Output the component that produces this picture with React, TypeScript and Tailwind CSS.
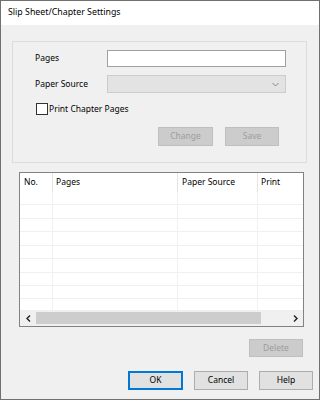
const font = { fontFamily: '"Noto Sans", "DejaVu Sans", sans-serif' };

function Btn({ label, disabled, primary, className }: { label: string; disabled?: boolean; primary?: boolean; className?: string }) {
  let look = 'border border-[#adadad] bg-[#e1e1e1] text-black';
  if (disabled) look = 'border border-[#bfbfbf] bg-[#cccccc] text-[#9d9d9d]';
  if (primary) look = 'border-2 border-[#0078d7] bg-[#e1e1e1] text-black';
  return (
    <div className={`flex items-center justify-center text-[8.5px] leading-none ${look} ${className ?? ''}`}>
      {label}
    </div>
  );
}

const rowHeights = [13, 14, 13, 14, 13, 14, 13, 13];

function Cols({ h, last }: { h: number; last?: boolean }) {
  return (
    <div className={`flex ${last ? '' : 'border-b border-[#f0f0f0]'}`} style={{ height: h }}>
      <div className="w-[33px] border-r border-[#f0f0f0]" />
      <div className="w-[125px] border-r border-[#f0f0f0]" />
      <div className="w-[80px] border-r border-[#f0f0f0]" />
      <div className="flex-1" />
    </div>
  );
}

export default function App() {
  return (
    <div className="w-[320px] h-[400px] border border-[#707070] bg-[#f0f0f0] flex flex-col text-[8.5px]" style={font}>
      <div className="h-[24px] bg-white flex items-center pl-[7px] text-[8.8px] text-black">
        Slip Sheet/Chapter Settings
      </div>

      {/* group box */}
      <div className="ml-[11px] mt-[16px] w-[295px] h-[122px] border border-[#dcdcdc] flex flex-col">
        <div className="mt-[8px] flex items-center h-[17px]">
          <div className="w-[94px] pl-[22px] text-black">Pages</div>
          <div className="w-[179px] h-[17px] border border-[#a0a0a0] bg-white" />
        </div>
        <div className="mt-[8px] flex items-center h-[18px]">
          <div className="w-[94px] pl-[22px] text-black">Paper Source</div>
          <div className="w-[179px] h-[18px] border border-[#cccccc] bg-[#e3e3e3] flex items-center justify-end pr-[6px]">
            <svg width="7" height="5" viewBox="0 0 7 5">
              <path d="M0.5 1 L3.5 4 L6.5 1" fill="none" stroke="#888" strokeWidth="1" />
            </svg>
          </div>
        </div>
        <div className="mt-[10px] flex items-center pl-[23px]">
          <div className="w-[12px] h-[12px] border border-[#333] bg-white" />
          <div className="ml-[1px] text-black">Print Chapter Pages</div>
        </div>
        <div className="mt-[11px] flex pl-[145px] gap-[12px]">
          <Btn label="Change" disabled className="w-[55px] h-[19px]" />
          <Btn label="Save" disabled className="w-[54px] h-[19px]" />
        </div>
      </div>

      {/* table */}
      <div className="ml-[18px] mt-[9px] w-[285px] h-[155px] border border-[#828282] bg-white flex flex-col">
        <div className="flex h-[19px] text-black">
          <div className="w-[33px] border-r border-[#e5e5e5] pl-[4px] flex items-center">No.</div>
          <div className="w-[125px] border-r border-[#e5e5e5] pl-[3px] flex items-center">Pages</div>
          <div className="w-[80px] border-r border-[#e5e5e5] pl-[4px] flex items-center">Paper Source</div>
          <div className="flex-1 pl-[3px] flex items-center">Print</div>
        </div>
        <div className="flex flex-col">
          {rowHeights.map((h, i) => (
            <Cols key={i} h={h} />
          ))}
          <Cols h={11} last />
        </div>
        <div className="flex h-[16px] bg-[#f0f0f0]">
          <div className="w-[16px] flex items-center justify-center">
            <svg width="5" height="7" viewBox="0 0 5 7">
              <path d="M4 0.5 L1 3.5 L4 6.5" fill="none" stroke="#222" strokeWidth="1.4" />
            </svg>
          </div>
          <div className="w-[225px] my-[2px] bg-[#cdcdcd]" />
          <div className="flex-1" />
          <div className="w-[16px] flex items-center justify-center">
            <svg width="5" height="7" viewBox="0 0 5 7">
              <path d="M1 0.5 L4 3.5 L1 6.5" fill="none" stroke="#222" strokeWidth="1.4" />
            </svg>
          </div>
        </div>
      </div>

      <div className="mt-[12px] flex justify-end pr-[16px]">
        <Btn label="Delete" disabled className="w-[54px] h-[18px]" />
      </div>

      <div className="mt-[14px] flex justify-end pr-[6px] gap-[11px]">
        <Btn label="OK" primary className="w-[55px] h-[19px]" />
        <Btn label="Cancel" className="w-[54px] h-[19px]" />
        <Btn label="Help" className="w-[54px] h-[19px]" />
      </div>
    </div>
  );
}
